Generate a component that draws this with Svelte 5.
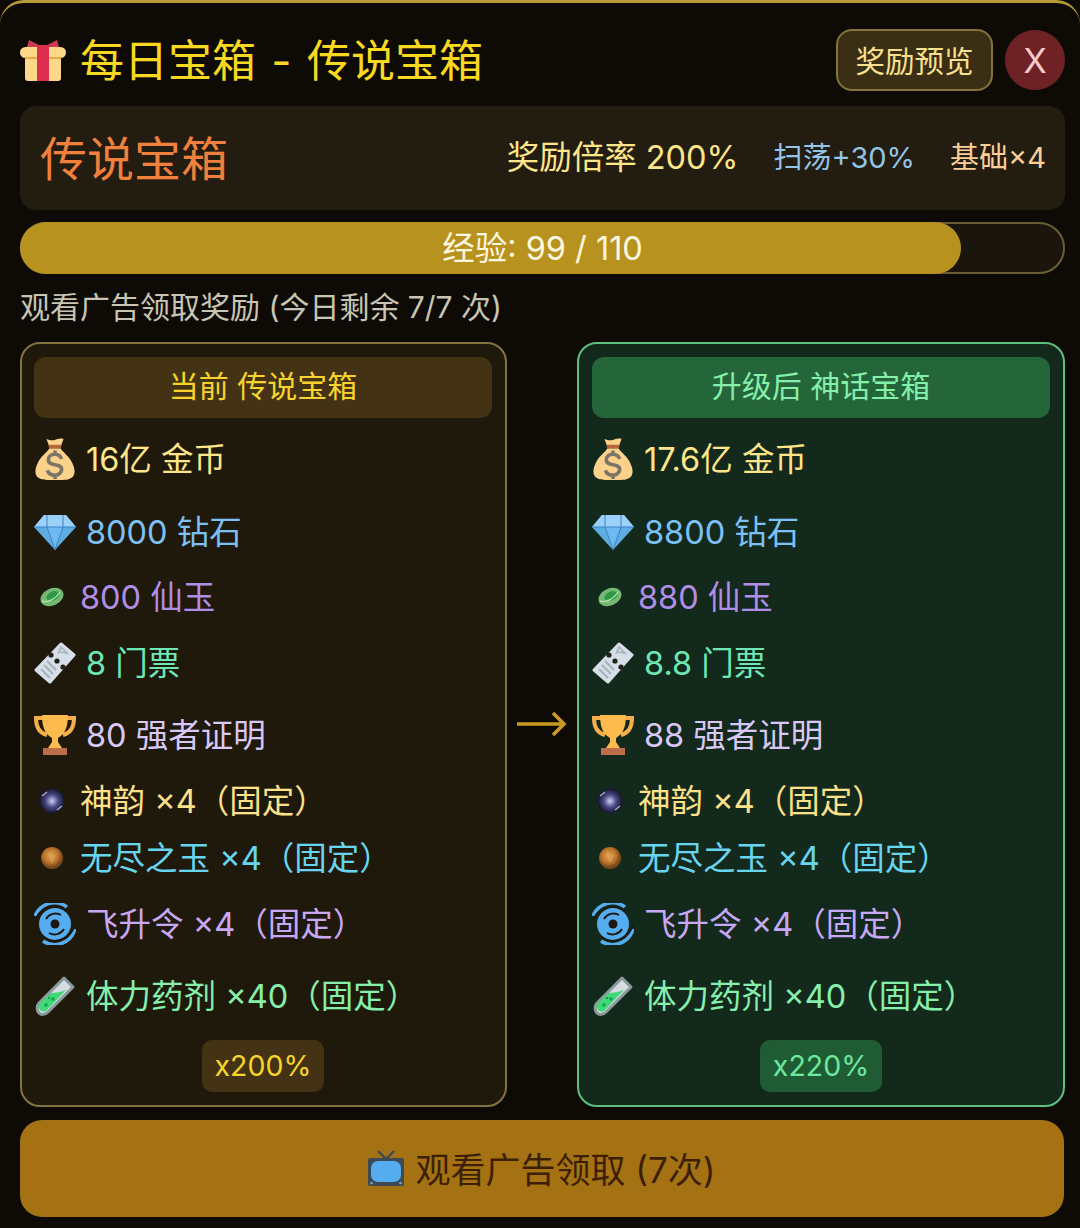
<script>
	const tiers = [
		{
			cls: 'current',
			title: '当前 传说宝箱',
			rate: 'x200%',
			rows: ['16亿 金币', '8000 钻石', '800 仙玉', '8 门票', '80 强者证明']
		},
		{
			cls: 'next',
			title: '升级后 神话宝箱',
			rate: 'x220%',
			rows: ['17.6亿 金币', '8800 钻石', '880 仙玉', '8.8 门票', '88 强者证明']
		}
	];
	const kinds = [
		{ icon: 'bag', color: '#fde68a' },
		{ icon: 'gem', color: '#7cc0f5' },
		{ icon: 'jade', color: '#b08ee8' },
		{ icon: 'ticket', color: '#6ee7b7' },
		{ icon: 'trophy', color: '#d8c8f5' }
	];
	const fixed = [
		{ icon: 'nebula', color: '#fde08a', text: '神韵 ×4（固定）' },
		{ icon: 'orb', color: '#67d4f0', text: '无尽之玉 ×4（固定）' },
		{ icon: 'cyclone', color: '#c8a8f5', text: '飞升令 ×4（固定）' },
		{ icon: 'potion', color: '#86efac', text: '体力药剂 ×40（固定）' }
	];
	const small = ['jade', 'nebula', 'orb'];
	function rowsOf(tier) {
		return [
			...tier.rows.map((text, i) => ({ ...kinds[i], text })),
			...fixed
		];
	}
</script>

{#snippet icon(name)}
	{#if name === 'bag'}
		<svg viewBox="0 0 42 46" width="40" height="44">
			<path d="M12 2c3 1 6 2 9 1s6-2 9-1l-3 8H15z" fill="#fcd28a" />
			<path d="M14 8h14l-1 4H15z" fill="#b3673a" />
			<path d="M15 12h12c3 5 9 8 12 15 4 8 3 14-1 16-3 2-6 2-9 2H13c-3 0-6 0-9-2-4-2-5-8-1-16 3-7 9-10 12-15z" fill="#fcd28a" />
			<path d="M28 23c-1-3-4-5-7-5-5 0-7 3-7 6 0 7 14 3 14 10 0 3-3 6-7 6-4 0-7-2-8-5M21 14v5M21 40v4" fill="none" stroke="#7d7468" stroke-width="3.8" />
		</svg>
	{:else if name === 'gem'}
		<svg viewBox="0 0 42 36" width="42" height="36">
			<path d="M10 1h22l10 12-21 23L0 13z" fill="#5dade2" />
			<path d="M10 1h22l10 12H0z" fill="#9bd0f8" />
			<path d="M13 13l8 23 8-23z" fill="#6fb9f2" />
			<path d="M0 13h42M13 13l8 23 8-23M13 1v12M29 1v12" fill="none" stroke="#3d82c4" stroke-width="1" />
		</svg>
	{:else if name === 'jade'}
		<svg viewBox="0 0 36 36" width="36" height="36">
			<ellipse cx="18" cy="18" rx="12" ry="8.5" transform="rotate(-24 18 18)" fill="#74b874" />
			<ellipse cx="19" cy="17" rx="7" ry="4.4" transform="rotate(-24 19 17)" fill="#2f9a45" />
			<path d="M8 22c5 2 13-1 18-9" fill="none" stroke="#b5e0ac" stroke-width="1.4" />
		</svg>
	{:else if name === 'ticket'}
		<svg viewBox="0 0 42 42" width="42" height="42">
			<path d="M27 2 40 13 16 40 2 28z" fill="#d6dfe8" stroke="#d6dfe8" stroke-width="3" stroke-linejoin="round" />
			<circle cx="17" cy="13" r="2.6" fill="#23201a" />
			<circle cx="23" cy="19" r="2.6" fill="#23201a" />
			<circle cx="29" cy="25" r="2.6" fill="#23201a" />
			<path d="M10 23l9 9M13 19l9 9M7 27l9 9" fill="none" stroke="#a8b2bc" stroke-width="2.2" />
			<path d="M24 12l3-7 6 6-7-1" fill="none" stroke="#a8b2bc" stroke-width="1.6" />
		</svg>
	{:else if name === 'trophy'}
		<svg viewBox="0 0 42 42" width="42" height="42">
			<path d="M9 4H2c0 9 3 15 11 17M33 4h7c0 9-3 15-11 17" fill="none" stroke="#f4ae4a" stroke-width="4" />
			<path d="M8 1h26c0 12-3 19-10 23v4l4 6H14l4-6v-4C11 20 8 13 8 1z" fill="#fdbb4d" />
			<path d="M9 34h24v7H9z" fill="#bd6d4a" />
		</svg>
	{:else if name === 'nebula'}
		<svg viewBox="0 0 36 36" width="36" height="36">
			<defs>
				<radialGradient id="neb">
					<stop offset="0" stop-color="#d0d0f4" />
					<stop offset=".5" stop-color="#4a4a86" />
					<stop offset="1" stop-color="#14142a" />
				</radialGradient>
			</defs>
			<circle cx="18" cy="18" r="12.5" fill="url(#neb)" />
			<path d="M8 13l5-4M23 27l5-4" stroke="#a6a6c4" stroke-width="1.6" />
		</svg>
	{:else if name === 'orb'}
		<svg viewBox="0 0 36 36" width="36" height="36">
			<defs>
				<radialGradient id="orb" cx=".45" cy=".4">
					<stop offset="0" stop-color="#e6a654" />
					<stop offset=".7" stop-color="#b87028" />
					<stop offset="1" stop-color="#7a4a1c" />
				</radialGradient>
			</defs>
			<circle cx="18" cy="18" r="11" fill="url(#orb)" />
			<path d="M15 13l3 8 3-6" fill="none" stroke="#d9a25c" stroke-width="1.2" />
		</svg>
	{:else if name === 'cyclone'}
		<svg viewBox="0 0 42 42" width="42" height="42">
			<circle cx="21" cy="21" r="16" fill="#55acee" />
			<circle cx="21" cy="21" r="4.5" fill="#1c1710" />
			<path d="M1 13A21 21 0 0 1 33 4M41 26A21 21 0 0 1 9 38" fill="none" stroke="#55acee" stroke-width="3.6" />
			<path d="M1 17A21 21 0 0 1 33 8M41 22A21 21 0 0 1 9 34" fill="none" stroke="#1c1710" stroke-width="1.4" />
			<path d="M12 16A11 11 0 0 1 27 12M30 26A11 11 0 0 1 15 30" fill="none" stroke="#1c1710" stroke-width="1.8" />
		</svg>
	{:else if name === 'potion'}
		<svg viewBox="0 0 42 42" width="42" height="42">
			<path d="M30 3 39 12 14 37c-3 3-7 3-9 1s-3-7 0-10z" fill="#d5dde3" stroke="#8a9a9a" stroke-width="3" stroke-linejoin="round" />
			<path d="M17 18c5 0 10-1 15-3L13 35c-2 2-5 2-7 0s-2-5 0-7z" fill="#3fd977" />
			<circle cx="12" cy="30" r="1.8" fill="#1d9e50" />
			<circle cx="19" cy="24" r="1.8" fill="#1d9e50" />
			<circle cx="15" cy="23" r="1.3" fill="#1d9e50" />
		</svg>
	{/if}
{/snippet}

{#snippet card(tier)}
	<section class="card {tier.cls}">
		<h3>{tier.title}</h3>
		<ul>
			{#each rowsOf(tier) as row}
				<li class:small={small.includes(row.icon)} style="color: {row.color}">
					<span class="ico">{@render icon(row.icon)}</span>
					<span class="txt">{row.text}</span>
				</li>
			{/each}
		</ul>
		<div class="rate">{tier.rate}</div>
	</section>
{/snippet}

<div class="panel">
	<header>
		<svg class="gift" viewBox="0 0 46 42" width="46" height="42">
			<path d="M9 1l12 6h4l12-6 3 10H6z" fill="#c73a52" />
			<rect x="5" y="12" width="36" height="30" rx="3" fill="#fdd888" />
			<rect x="0" y="8" width="46" height="11" rx="5.5" fill="#fdd888" />
			<path d="M5 19h36" stroke="#e8a94a" stroke-width="2" />
			<rect x="17" y="6" width="12" height="36" fill="#dd2e50" />
		</svg>
		<h1>每日宝箱 - 传说宝箱</h1>
		<button class="preview">奖励预览</button>
		<button class="close">X</button>
	</header>

	<div class="tier">
		<h2>传说宝箱</h2>
		<span class="mult">奖励倍率 200%</span>
		<span class="sweep">扫荡+30%</span>
		<span class="base">基础×4</span>
	</div>

	<div class="bar">
		<div class="fill" style="width: calc({(99 / 110) * 100}% + 4px)"></div>
		<span>经验: 99 / 110</span>
	</div>

	<p class="hint">观看广告领取奖励 (今日剩余 7/7 次)</p>

	<div class="compare">
		{@render card(tiers[0])}
		<div class="arrow">
			<svg viewBox="0 0 50 26" width="50" height="26">
				<path d="M0 13h47M36 2l11 11-11 11" fill="none" stroke="#c99a22" stroke-width="3.6" />
			</svg>
		</div>
		{@render card(tiers[1])}
	</div>

	<button class="watch">
		<svg viewBox="0 0 36 36" width="36" height="36">
			<path d="M10 1l8 8 8-8" fill="none" stroke="#3c4a55" stroke-width="2.4" />
			<rect x="0" y="8" width="36" height="28" rx="2" fill="#3c4a55" />
			<rect x="3" y="11" width="30" height="21" rx="7" fill="#55acee" />
			<circle cx="3.5" cy="33" r="1.3" fill="#8aa0b0" />
			<circle cx="32.5" cy="33" r="1.3" fill="#8aa0b0" />
		</svg>
		<span>观看广告领取 (7次)</span>
	</button>
</div>

<style>
	:global(body) {
		background: #0e0b07;
	}
	.panel {
		box-sizing: border-box;
		width: 1080px;
		height: 1228px;
		padding: 26px 15px 11px 20px;
		border-top: 3px solid #b59a3c;
		border-radius: 24px 24px 0 0;
		background: #0e0b07;
		font-family: Inter, 'Noto Sans CJK SC', sans-serif;
		font-weight: 400;
		display: flex;
		flex-direction: column;
	}
	header {
		display: flex;
		align-items: center;
		height: 62px;
	}
	.gift {
		margin-right: 14px;
	}
	h1 {
		margin: 0 0 4px;
		flex: 1;
		font-size: 44px;
		font-weight: 400;
		word-spacing: 3px;
		color: #f8d821;
	}
	button {
		font-family: inherit;
		border: none;
		padding: 0;
	}
	.preview {
		width: 157px;
		height: 62px;
		padding-bottom: 3px;
		border: 2px solid #84733a;
		border-radius: 16px;
		background: #3a2e14;
		color: #f9e08f;
		font-size: 29.5px;
		margin-right: 12px;
	}
	.close {
		width: 60px;
		height: 60px;
		border-radius: 50%;
		background: #6f2226;
		color: #fcc9c9;
		font-size: 34px;
	}
	.tier {
		display: flex;
		align-items: center;
		height: 104px;
		margin-top: 15px;
		padding: 0 19px 0 20px;
		border-radius: 16px;
		background: #231c10;
	}
	h2 {
		margin: 0 0 4px;
		flex: 1;
		font-size: 47px;
		font-weight: 400;
		color: #f0803c;
	}
	.tier span {
		font-size: 29px;
		padding-bottom: 6px;
	}
	.tier .mult {
		font-size: 32.5px;
		color: #fde68a;
		margin-right: 35px;
	}
	.sweep {
		color: #93c5e8;
		margin-right: 35px;
	}
	.base {
		color: #fbcf97;
	}
	.bar {
		position: relative;
		box-sizing: border-box;
		height: 52px;
		margin-top: 12px;
		padding-bottom: 4px;
		border: 2px solid #6b5d33;
		border-radius: 26px;
		background: #1a150d;
		display: flex;
		align-items: center;
		justify-content: center;
		color: #fff8e0;
		font-size: 32.5px;
	}
	.fill {
		position: absolute;
		left: -2px;
		top: -2px;
		bottom: -2px;
		border-radius: 26px;
		background: #b8921f;
	}
	.bar span {
		position: relative;
	}
	.hint {
		margin: 12px 0 0;
		height: 43px;
		line-height: 43px;
		font-size: 30px;
		color: #c9c5b5;
	}
	.compare {
		display: flex;
		margin-top: 13px;
		height: 766px;
	}
	.arrow {
		width: 70px;
		display: flex;
		align-items: center;
		justify-content: center;
	}
	.card {
		box-sizing: border-box;
		width: 487px;
		flex: none;
		padding: 13px 13px 13px 12px;
		border: 2px solid #84733f;
		border-radius: 20px;
		background: #1f190b;
		display: flex;
		flex-direction: column;
	}
	.card.next {
		width: 488px;
		padding: 13px;
		border-color: #5fbf7f;
		background: #13291b;
	}
	h3 {
		margin: 0;
		height: 61px;
		line-height: 59px;
		text-align: center;
		font-size: 30px;
		font-weight: 400;
		border-radius: 12px;
		background: #433314;
		color: #f8d32d;
	}
	.next h3 {
		background: #24663a;
		color: #86efac;
	}
	ul {
		list-style: none;
		margin: 9px 0 0;
		padding: 0;
		display: flex;
		flex-direction: column;
		gap: 7.75px;
		flex: 1;
	}
	li {
		display: flex;
		align-items: center;
		height: 65px;
		font-size: 32.5px;
		gap: 10px;
	}
	li.small {
		height: 50px;
	}
	.txt {
		padding-bottom: 5px;
	}
	.ico {
		display: flex;
		justify-content: center;
		width: 42px;
	}
	li.small .ico {
		width: 36px;
	}
	.rate {
		align-self: center;
		padding: 0 13px;
		height: 52px;
		line-height: 52px;
		font-size: 28.5px;
		border-radius: 10px;
		background: #433314;
		color: #f8d32d;
	}
	.next .rate {
		background: #1f5c33;
		color: #6ee7a0;
	}
	.watch {
		margin-top: 13px;
		padding-bottom: 2px;
		width: 1044px;
		height: 97px;
		border-radius: 22px;
		background: #a57213;
		color: #3d1f08;
		font-size: 35px;
		display: flex;
		align-items: center;
		justify-content: center;
		gap: 11px;
	}
</style>
